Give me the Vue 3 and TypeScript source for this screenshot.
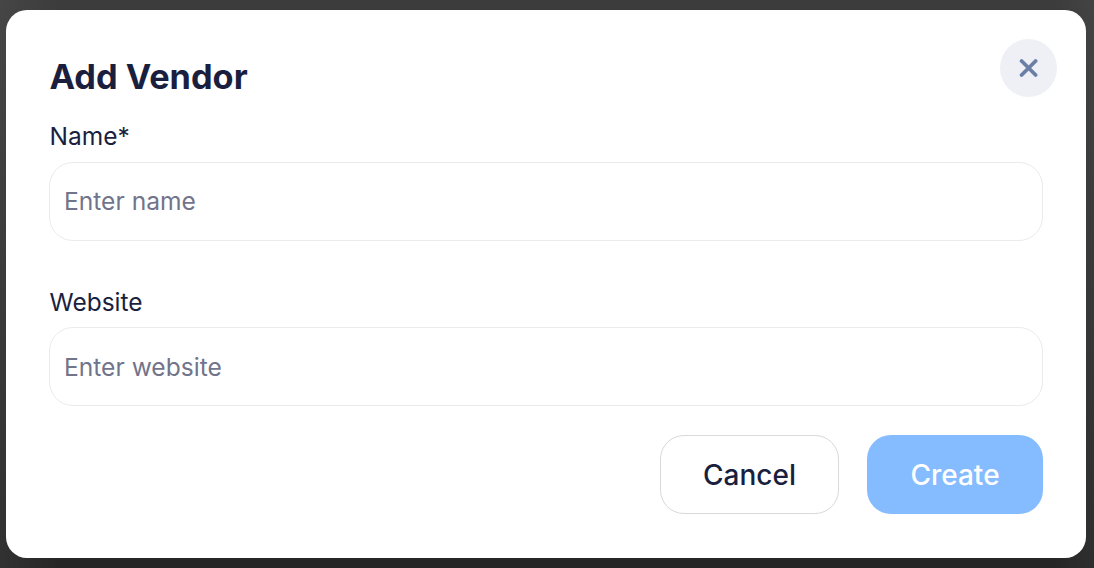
<script setup lang="ts">
const fields = [
  { label: 'Name*', placeholder: 'Enter name' },
  { label: 'Website', placeholder: 'Enter website' },
]
</script>

<template>
  <div class="backdrop">
    <div class="modal">
      <button class="close" type="button" aria-label="Close">
        <svg width="20" height="20" viewBox="0 0 20 20" fill="none">
          <path d="M2.6 3L16.6 17M16.6 3L2.6 17" stroke="#6B7FA6" stroke-width="3.8" stroke-linecap="round" />
        </svg>
      </button>
      <h2 class="title">Add Vendor</h2>
      <div v-for="f in fields" :key="f.label" class="field">
        <label class="label">{{ f.label }}</label>
        <input class="input" type="text" :placeholder="f.placeholder" />
      </div>
      <div class="actions">
        <button class="btn cancel" type="button">Cancel</button>
        <button class="btn create" type="button">Create</button>
      </div>
    </div>
  </div>
</template>

<style>
html, body { margin: 0; padding: 0; }
</style>

<style scoped>
.backdrop {
  width: 1094px;
  height: 568px;
  box-sizing: border-box;
  padding: 10px 8px 10px 6px;
  background:
    linear-gradient(90deg, rgba(255, 255, 255, 0.05), rgba(255, 255, 255, 0) 60px),
    linear-gradient(270deg, rgba(255, 255, 255, 0.04), rgba(255, 255, 255, 0) 40px),
    linear-gradient(180deg, #3c3c3c 0%, #262626 100%);
  font-family: Inter, "Liberation Sans", sans-serif;
}
.modal {
  position: relative;
  height: 548px;
  box-sizing: border-box;
  background: #fff;
  border-radius: 21px;
  padding: 44px 43px 0 43px;
  display: flex;
  flex-direction: column;
}
.close {
  position: absolute;
  top: 29px;
  right: 29px;
  width: 57px;
  height: 58px;
  border: 0;
  border-radius: 50%;
  background: #eef0f5;
  padding: 0;
  display: flex;
  align-items: center;
  justify-content: center;
}
.title {
  margin: 0;
  padding-left: 0.5px;
  font-size: 34.3px;
  line-height: 46px;
  font-weight: 700;
  color: #1a1f40;
}
.field {
  display: flex;
  flex-direction: column;
  margin-bottom: 44px;
}
.field + .field { margin-bottom: 29px; }
.label {
  margin-top: 19px;
  padding-left: 0.5px;
  font-size: 24.5px;
  line-height: 34px;
  color: #1a1f40;
  margin-bottom: 9px;
}
.field + .field .label { margin-top: 0; margin-bottom: 8px; }
.input {
  height: 79px;
  box-sizing: border-box;
  border: 1px solid #ebebee;
  border-radius: 24px;
  padding: 0 14px 2px;
  font: inherit;
  font-size: 24.6px;
  color: #1a1f40;
  outline: none;
  background: #fff;
}
.field + .field .input { padding-bottom: 0; }
.input::placeholder { color: #71748a; opacity: 1; }
.actions {
  display: flex;
  justify-content: flex-end;
  gap: 28px;
}
.btn {
  height: 79px;
  box-sizing: border-box;
  border-radius: 24px;
  font: inherit;
  font-size: 28px;
  font-weight: 450;
}
.cancel {
  width: 179px;
  background: #fff;
  border: 1px solid #d9d9dc;
  color: #1a1f40;
}
.create {
  width: 176px;
  background: #85bbff;
  border: 0;
  color: #fff;
}
</style>
